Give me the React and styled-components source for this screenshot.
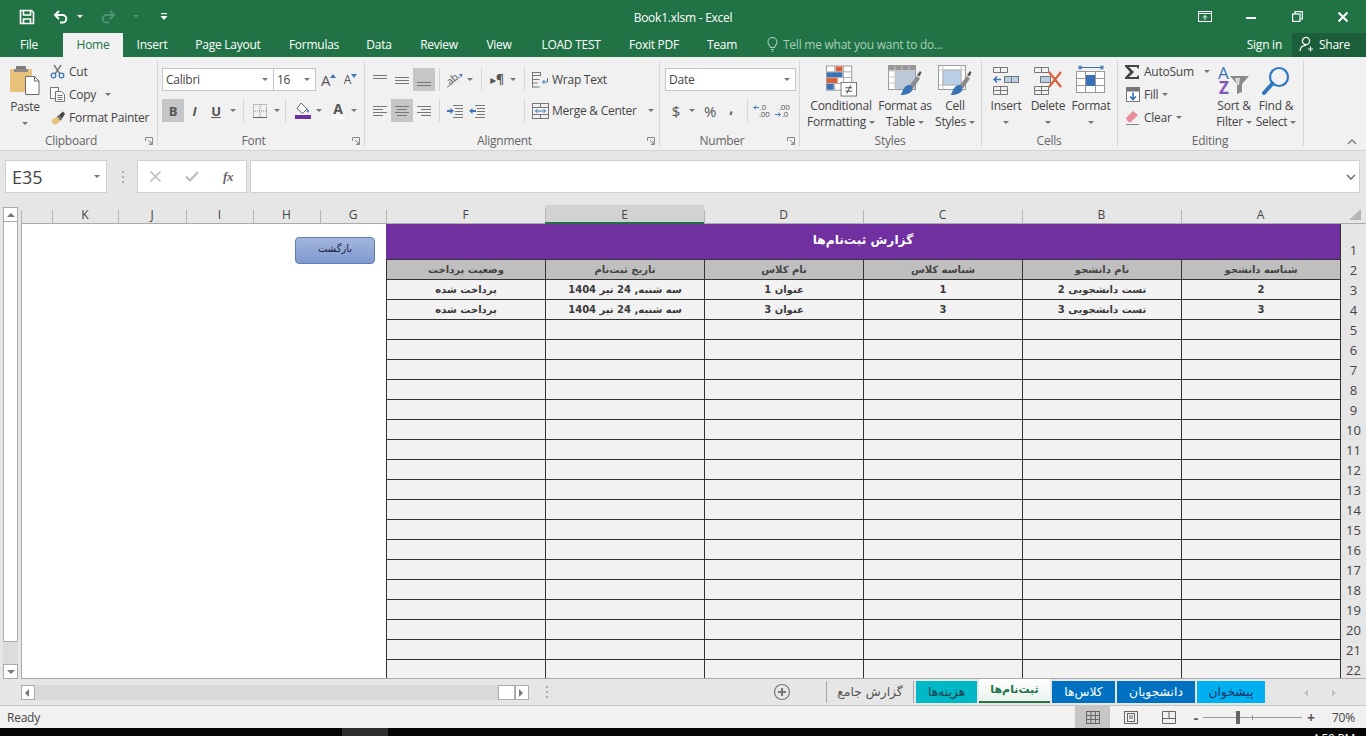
import styled, { createGlobalStyle } from "styled-components";

const GlobalStyle = createGlobalStyle`
  html, body { margin: 0; padding: 0; height: 100%; overflow: hidden; }
  body {
    font-family: "Open Sans", "Noto Sans", "DejaVu Sans", sans-serif;
    font-size: 12px;
    color: #444;
    letter-spacing: -0.25px;
  }
  * { box-sizing: border-box; }
  svg { display: block; overflow: visible; }
`;

const Page = styled.div`
  width: 1366px;
  height: 736px;
  display: flex;
  flex-direction: column;
  background: #e6e6e6;
  overflow: hidden;
`;

/* ---------- title bar ---------- */
const TitleBar = styled.header`
  height: 33px;
  background: #217346;
  color: #fff;
  display: grid;
  grid-template-columns: 1fr auto 1fr;
  align-items: center;
`;
const Qat = styled.div`
  display: flex;
  align-items: center;
  padding-left: 19px;
`;
const QatBtn = styled.div`
  width: ${(p) => p.$w}px;
  margin-left: ${(p) => p.$ml || 0}px;
  display: flex;
  justify-content: center;
  align-items: center;
`;
const DocTitle = styled.div`
  font-size: 12px;
  padding-top: 1px;
`;
const WinControls = styled.div`
  display: flex;
  justify-content: flex-end;
  align-items: center;
`;
const WinBtn = styled.div`
  width: 46px;
  display: flex;
  justify-content: center;
`;

/* ---------- tabs ---------- */
const TabBar = styled.nav`
  height: 24px;
  background: #217346;
  display: flex;
  align-items: stretch;
  color: #fff;
`;
const Tab = styled.div`
  width: ${(p) => p.$w}px;
  margin-right: ${(p) => p.$mr || 0}px;
  padding-bottom: 2px;
  display: flex;
  align-items: center;
  justify-content: center;
  background: ${(p) => (p.$active ? "#f1f1f1" : "transparent")};
  color: ${(p) => (p.$active ? "#217346" : "#fff")};
`;
const TellMe = styled.div`
  display: flex;
  align-items: center;
  gap: 5px;
  margin-left: 14px;
  padding-bottom: 2px;
  color: #a9cdb7;
`;
const SignIn = styled.div`
  margin-left: auto;
  display: flex;
  align-items: center;
  padding: 0 10px 2px 0;
`;
const Share = styled.div`
  width: 74px;
  background: #1b5e39;
  display: flex;
  align-items: center;
  gap: 4px;
  padding: 0 0 2px 7px;
`;

/* ---------- ribbon ---------- */
const Ribbon = styled.section`
  height: 94px;
  background: #f1f1f1;
  border-bottom: 1px solid #d4d4d4;
  display: flex;
  align-items: flex-start;
  padding-top: 4px;
`;
const Group = styled.div`
  width: ${(p) => p.$w}px;
  height: 85px;
  flex-shrink: 0;
  display: flex;
  flex-direction: column;
  border-right: 1px solid #d6d6d6;
`;
const GroupBody = styled.div`
  height: 72px;
  flex-shrink: 0;
  display: flex;
  padding-left: ${(p) => p.$pl || 0}px;
`;
const GroupLabel = styled.div`
  height: 16px;
  flex-shrink: 0;
  display: grid;
  grid-template-columns: ${(p) => (p.$launcher ? "1fr 14px" : "1fr")};
  align-items: center;
  text-align: center;
  color: #666;
  line-height: 16px;
  margin-right: 1px;
`;
const Launcher = styled.svg`
  width: 8px;
  height: 8px;
  justify-self: center;
`;
const PasteBtn = styled.div`
  width: 44px;
  margin-left: 3px;
  display: flex;
  flex-direction: column;
  align-items: center;
  padding-top: 4px;
`;
const PasteLabel = styled.span`
  margin-top: 3px;
`;
const SmallCol = styled.div`
  width: ${(p) => (p.$w ? `${p.$w}px` : "auto")};
  margin-left: ${(p) => p.$ml || 0}px;
  padding-left: ${(p) => p.$pl || 0}px;
  margin-top: -1px;
  display: flex;
  flex-direction: column;
  flex-shrink: 0;
`;
const SmallBtn = styled.div`
  height: 23px;
  display: flex;
  align-items: center;
  gap: 4px;
  white-space: nowrap;
`;
const IconSlot = styled.span`
  width: ${(p) => p.$w || 14}px;
  display: flex;
  justify-content: center;
  flex-shrink: 0;
`;
const Rows = styled.div`
  display: flex;
  flex-direction: column;
  gap: 8px;
  padding-top: 7px;
  width: ${(p) => (p.$w ? `${p.$w}px` : "auto")};
  flex-shrink: 0;
`;
const Row = styled.div`
  height: 23px;
  display: flex;
  align-items: center;
`;
const Tool = styled.div`
  width: ${(p) => p.$w}px;
  height: 23px;
  margin-left: ${(p) => p.$ml || 0}px;
  display: flex;
  align-items: center;
  justify-content: center;
  flex-shrink: 0;
  background: ${(p) => (p.$active ? "#c6c6c6" : "transparent")};
  color: #555;
  font-weight: ${(p) => (p.$bold ? 700 : 400)};
  font-size: ${(p) => p.$fs || 12}px;
  font-style: ${(p) => (p.$italic ? "italic" : "normal")};
  text-decoration: ${(p) => (p.$under ? "underline" : "none")};
`;
const CommaMark = styled(Tool)`
  padding-bottom: 7px;
`;
const FontColorA = styled.span`
  font-weight: 700;
  font-size: 14px;
  line-height: 14px;
  color: #555;
  padding: 0 2px;
  border-bottom: 3px solid #fff;
`;
const RtlMark = styled.span`
  color: #555;
  font-size: 12px;
  font-weight: 700;
`;
const ToolSep = styled.span`
  width: 1px;
  height: 23px;
  background: #d6d6d6;
  flex-shrink: 0;
  margin: 0 ${(p) => p.$r ?? 4}px 0 ${(p) => p.$l ?? 4}px;
`;
const PushSep = styled(ToolSep)`
  margin: 0 0 0 auto;
`;
const Combo = styled.div`
  width: ${(p) => p.$w}px;
  height: 23px;
  background: #fff;
  border: 1px solid #c6c6c6;
  display: flex;
  align-items: center;
  justify-content: space-between;
  padding: 0 5px 0 3px;
  flex-shrink: 0;
  margin-left: ${(p) => p.$ml || 0}px;
`;
const WrapCol = styled.div`
  padding-left: 7px;
  display: flex;
  flex-direction: column;
  gap: 8px;
  padding-top: 7px;
`;
const BigBtn = styled.div`
  width: ${(p) => p.$w}px;
  flex-shrink: 0;
  display: flex;
  flex-direction: column;
  align-items: center;
  padding-top: 4px;
  line-height: 16px;
  text-align: center;
  white-space: nowrap;
`;
const BigIcon = styled.div`
  height: 33px;
  padding-bottom: 1px;
  display: flex;
  align-items: center;
  justify-content: center;
`;
const CaretLine = styled.div`
  height: 16px;
  display: flex;
  align-items: center;
  justify-content: center;
  gap: 3px;
`;
const Caret = styled.i`
  display: inline-block;
  width: 0;
  height: 0;
  flex-shrink: 0;
  border-left: 3px solid transparent;
  border-right: 3px solid transparent;
  border-top: 3px solid ${(p) => p.$c || "#777"};
  margin-left: ${(p) => p.$ml || 0}px;
`;
const CaretBtn = styled.div`
  width: ${(p) => p.$w}px;
  height: 23px;
  display: flex;
  align-items: center;
  justify-content: center;
  flex-shrink: 0;
`;
const RibbonEnd = styled.div`
  flex: 1;
  height: 85px;
  display: flex;
  align-items: flex-end;
  justify-content: flex-end;
  padding: 0 9px 1px 0;
`;

/* ---------- formula bar ---------- */
const FormulaRow = styled.div`
  height: 33px;
  margin: 9px 6px 12px 5px;
  display: flex;
  align-items: stretch;
  flex-shrink: 0;
`;
const NameBox = styled.div`
  width: 102px;
  background: #fff;
  border: 1px solid #d0d0d0;
  font-size: 18px;
  letter-spacing: 0;
  color: #444;
  display: flex;
  align-items: center;
  justify-content: space-between;
  padding: 0 6px 0 6px;
`;
const Dots = styled.div`
  width: 30px;
  display: flex;
  justify-content: center;
  align-items: center;
`;
const FnBox = styled.div`
  width: 110px;
  background: #fff;
  border: 1px solid #d0d0d0;
  display: flex;
  align-items: center;
  padding-left: 12px;
  gap: 24px;
`;
const FormulaInput = styled.div`
  flex: 1;
  margin-left: 3px;
  background: #fff;
  border: 1px solid #d0d0d0;
  display: flex;
  align-items: center;
  justify-content: flex-end;
  padding-right: 3px;
`;

/* ---------- sheet ---------- */
const Sheet = styled.div`
  height: 474px;
  display: flex;
  flex-shrink: 0;
`;
const VScroll = styled.div`
  width: 21px;
  padding: 2px 3px 0 3px;
  display: flex;
  flex-direction: column;
  flex-shrink: 0;
`;
const ScrollBtn = styled.div`
  height: 15px;
  background: #fff;
  border: 1px solid #ababab;
  display: flex;
  align-items: center;
  justify-content: center;
  flex-shrink: 0;
`;
const VThumb = styled.div`
  height: 420px;
  background: #fff;
  border: 1px solid #ababab;
  border-top: none;
  flex-shrink: 0;
`;
const VTrack = styled.div`
  flex: 1;
  background: #dcdcdc;
`;
const SheetMain = styled.div`
  flex: 1;
  display: flex;
  flex-direction: column;
  min-width: 0;
`;
const ColHeaders = styled.div`
  height: 19px;
  display: flex;
  flex-shrink: 0;
  border-bottom: 1px solid #ababab;
`;
const ColHead = styled.div`
  width: ${(p) => p.$w}px;
  flex-shrink: 0;
  display: flex;
  align-items: center;
  justify-content: center;
  font-size: 12px;
  letter-spacing: 0;
  color: #444;
  position: relative;
  background: ${(p) => (p.$selected ? "#d2d2d2" : "transparent")};
  border-bottom: ${(p) => (p.$selected ? "2px solid #217346" : "none")};
  margin-bottom: ${(p) => (p.$selected ? "-1px" : "0")};
  padding-top: 1px;
  &::after {
    content: "";
    position: absolute;
    left: 0;
    bottom: 0;
    width: 1px;
    height: 13px;
    background: #b5b5b5;
  }
`;
const Corner = styled.div`
  flex: 1;
  display: flex;
  align-items: flex-end;
  justify-content: flex-end;
  padding: 0 5px 3px 0;
`;
const SheetBody = styled.div`
  flex: 1;
  display: flex;
  min-height: 0;
  overflow: hidden;
  border-bottom: 1px solid #ababab;
`;
const BlankPane = styled.div`
  width: 365px;
  flex-shrink: 0;
  background: #fff;
  border-left: 1px solid #ababab;
  position: relative;
`;
const BackButton = styled.div`
  position: absolute;
  top: 13px;
  right: 11px;
  width: 80px;
  height: 27px;
  border: 1px solid #5b7db4;
  border-radius: 4px;
  background: linear-gradient(#a3b6de, #7f99cf);
  color: #14213d;
  font-family: "DejaVu Sans", sans-serif;
  font-size: 10px;
  letter-spacing: 0;
  display: flex;
  align-items: flex-start;
  justify-content: center;
  padding-top: 5px;
`;
const Table = styled.div`
  width: 955px;
  flex-shrink: 0;
  display: grid;
  grid-template-columns: repeat(6, 159px);
  grid-template-rows: 36px;
  grid-auto-rows: 20px;
  border-right: 1px solid #333;
  align-content: start;
  font-family: "DejaVu Sans", sans-serif;
  letter-spacing: 0;
`;
const TitleCell = styled.div`
  grid-column: 1 / -1;
  background: #7030a0;
  color: #fff;
  font-weight: 700;
  font-size: 12.2px;
  display: flex;
  align-items: center;
  justify-content: center;
  border-bottom: 1px solid #333;
  padding-bottom: 3px;
`;
const Cell = styled.div`
  background: ${(p) => (p.$head ? "#bfbfbf" : "#f2f2f2")};
  border-bottom: 1px solid #333;
  border-left: 1px solid #333;
  color: ${(p) => (p.$head ? "#444" : "#3a3a3a")};
  font-weight: 700;
  font-size: 10px;
  display: flex;
  align-items: center;
  justify-content: center;
  white-space: nowrap;
  padding-bottom: 1px;
`;
const RowHeaders = styled.div`
  flex: 1;
  display: flex;
  flex-direction: column;
`;
const RowHead = styled.div`
  height: ${(p) => p.$h}px;
  flex-shrink: 0;
  display: flex;
  align-items: flex-end;
  justify-content: center;
  font-size: 13px;
  letter-spacing: 0;
  color: #444;
  line-height: 18px;
  padding-bottom: 1px;
`;

/* ---------- sheet tabs ---------- */
const BottomBar = styled.div`
  height: 26px;
  display: flex;
  align-items: center;
  flex-shrink: 0;
`;
const HScroll = styled.div`
  width: 553px;
  padding-left: 21px;
  display: flex;
  align-items: center;
  flex-shrink: 0;
`;
const HBtn = styled.div`
  width: ${(p) => p.$w || 14}px;
  height: 15px;
  background: #fff;
  border: 1px solid #ababab;
  display: flex;
  align-items: center;
  justify-content: center;
  flex-shrink: 0;
`;
const HTrack = styled.div`
  width: 463px;
  height: 15px;
  background: #d9d9d9;
`;
const HDots = styled.span`
  margin-left: 16px;
`;
const AddSheet = styled.div`
  margin-left: 220px;
  flex-shrink: 0;
`;
const TabStrip = styled.div`
  width: 440px;
  margin-left: 34px;
  height: 22px;
  margin-top: -1px;
  display: flex;
  align-items: stretch;
  gap: 2px;
  flex-shrink: 0;
  font-family: "DejaVu Sans", sans-serif;
  font-size: 12.3px;
  letter-spacing: 0;
`;
const SheetTab = styled.div`
  width: ${(p) => p.$w}px;
  flex-shrink: 0;
  display: flex;
  align-items: center;
  justify-content: center;
  white-space: nowrap;
  background: ${(p) => p.$bg};
  color: ${(p) => p.$fg};
  ${(p) =>
    p.$active &&
    `
    margin-top: -2px;
    background: linear-gradient(#fff, #eaf3ee);
    border-bottom: 2px solid #217346;
    font-weight: 700;
    font-size: 11px;
  `}
`;
const TabDivider = styled.span`
  width: 1px;
  background: #a6a6a6;
  flex-shrink: 0;
`;
const TabNav = styled.div`
  flex: 1;
  display: flex;
  padding-left: 38px;
  gap: 20px;
`;

/* ---------- status bar ---------- */
const StatusBar = styled.footer`
  height: 23px;
  flex-shrink: 0;
  background: #f1f1f1;
  border-top: 1px solid #c6c6c6;
  display: flex;
  align-items: center;
  padding-left: 7px;
`;
const StatusRight = styled.div`
  margin-left: auto;
  width: 291px;
  height: 100%;
  display: flex;
  align-items: center;
`;
const ViewBtn = styled.div`
  width: ${(p) => p.$w}px;
  height: 100%;
  background: ${(p) => (p.$active ? "#c6c6c6" : "transparent")};
  display: flex;
  align-items: center;
  justify-content: center;
  flex-shrink: 0;
`;
const ZoomMark = styled.span`
  width: ${(p) => p.$w}px;
  text-align: center;
  font-weight: 700;
  font-size: 14px;
  color: #555;
  flex-shrink: 0;
  margin-left: ${(p) => p.$ml || 0}px;
`;
const ZoomTrack = styled.div`
  width: 99px;
  height: 1px;
  background: #9a9a9a;
  position: relative;
  flex-shrink: 0;
`;
const ZoomThumb = styled.span`
  position: absolute;
  left: 33px;
  top: -6px;
  width: 4px;
  height: 13px;
  background: #666;
`;
const ZoomTick = styled.span`
  position: absolute;
  left: 49px;
  top: -2px;
  width: 1px;
  height: 5px;
  background: #9a9a9a;
`;
const ZoomPct = styled.span`
  margin-left: 14px;
`;

const Taskbar = styled.div`
  height: 8px;
  background: #050505;
  display: flex;
  flex-shrink: 0;
  overflow: hidden;
`;
const TaskPatch = styled.div`
  width: 46px;
  margin-left: 342px;
  background: #2e2e2e;
`;
const Clock = styled.div`
  margin-left: auto;
  margin-right: 11px;
  color: #fff;
  font-size: 12px;
  line-height: 16px;
  padding-top: 3px;
`;

/* ---------- icons ---------- */
const SaveIcon = () => (
  <svg width="16" height="16" viewBox="0 0 16 16" fill="none" stroke="#fff" strokeWidth="1.6">
    <path d="M1.5 1.5h11l2 2v11h-13z" />
    <path d="M4.5 2v4h7V2M4.5 14.5V10h7v4.5" />
  </svg>
);
const UndoIcon = ({ c = "#fff", flip }) => (
  <svg width="16" height="14" viewBox="0 0 16 14" fill="none" stroke={c} strokeWidth="2">
    <g transform={flip ? "translate(16 0) scale(-1 1)" : undefined}>
      <path d="M6 1L2 5l4 4M2 5h7.5a3.8 3.8 0 0 1 0 7.6H7" />
    </g>
  </svg>
);
const QatMore = () => (
  <svg width="8" height="8" viewBox="0 0 8 8" fill="#fff">
    <rect x="1" y="0" width="6" height="1.2" />
    <path d="M0.5 3h7L4 7z" />
  </svg>
);
const DisplayIcon = () => (
  <svg width="14" height="11" viewBox="0 0 14 11" fill="none" stroke="#fff">
    <rect x=".5" y=".5" width="13" height="10" />
    <path d="M.5 2.5h13M7 9V4.5M5 6.5l2-2 2 2" />
  </svg>
);
const MinIcon = () => (
  <svg width="10" height="10" viewBox="0 0 10 10"><rect y="5" width="10" height="2" fill="#fff" /></svg>
);
const RestoreIcon = () => (
  <svg width="11" height="11" viewBox="0 0 11 11" fill="none" stroke="#fff" strokeWidth="1.2">
    <rect x=".6" y="3" width="7.4" height="7.4" />
    <path d="M3 3V.6h7.4V8H8" />
  </svg>
);
const CloseIcon = () => (
  <svg width="10" height="10" viewBox="0 0 10 10" stroke="#fff" strokeWidth="2"><path d="M.5.5l9 9M9.5.5l-9 9" /></svg>
);
const BulbIcon = () => (
  <svg width="11" height="15" viewBox="0 0 11 15" fill="none" stroke="#a9cdb7" strokeWidth="1.1">
    <path d="M3.5 10.5C3.2 8.6 1 7.8 1 5a4.5 4.5 0 0 1 9 0c0 2.8-2.2 3.6-2.5 5.5z" />
    <path d="M4 12.5h3M4.5 14.2h2" />
  </svg>
);
const UserIcon = () => (
  <svg width="16" height="16" viewBox="0 0 16 16" fill="none" stroke="#fff" strokeWidth="1.2">
    <circle cx="7" cy="5" r="3.6" />
    <path d="M1 15c.3-3.4 2.6-5.6 6-5.6M11.5 10.5v5M9 13h5" />
  </svg>
);
const PasteIcon = () => (
  <svg width="30" height="30" viewBox="0 0 30 30">
    <rect x="0" y="4" width="22" height="23" rx="1" fill="#e8c27b" />
    <rect x="6" y="1" width="10" height="5" rx="1" fill="#7d7d7d" />
    <rect x="4" y="4" width="14" height="3" fill="#8a8a8a" />
    <path d="M15.5 11.5h9l4.5 4.5v13.5h-13.5z" fill="#fff" stroke="#6a6a6a" />
    <path d="M24.5 11.5V16H29" fill="none" stroke="#6a6a6a" />
  </svg>
);
const CutIcon = () => (
  <svg width="15" height="15" viewBox="0 0 15 15" fill="none">
    <path d="M4 1l6 9M11 1L5 10" stroke="#777" strokeWidth="1.4" />
    <circle cx="3.5" cy="11.5" r="2.3" stroke="#3f78b5" strokeWidth="1.3" />
    <circle cx="11.5" cy="11.5" r="2.3" stroke="#3f78b5" strokeWidth="1.3" />
  </svg>
);
const CopyIcon = () => (
  <svg width="15" height="15" viewBox="0 0 15 15" fill="#f8f8f8" stroke="#777">
    <rect x=".5" y=".5" width="8" height="11" />
    <path d="M5.5 4.5h6l3 3v7h-9z" />
    <path d="M7.5 8.5h5M7.5 10.5h5M7.5 12.5h5" />
  </svg>
);
const PainterIcon = () => (
  <svg width="16" height="14" viewBox="0 0 16 14">
    <path d="M1 9.5L7 5.5l3.5 4.2L6 13.5H4z" fill="#e8c27b" />
    <path d="M7 5.5l1.8-1.5 3.3 4-1.6 1.7z" fill="#666" />
    <path d="M9 4l4-3.5 2 2.3-3 5z" fill="#444" />
  </svg>
);
const ArrowA = ({ size, up }) => (
  <Tool $w={13} $fs={size}>
    A
    <svg width="6" height="4" viewBox="0 0 6 4" style={{ marginTop: -8 }}>
      <path d={up ? "M0 4L3 0l3 4z" : "M0 0l3 4 3-4z"} fill="#3f78b5" />
    </svg>
  </Tool>
);
const BordersIcon = () => (
  <svg width="14" height="14" viewBox="0 0 14 14" fill="none" stroke="#888" strokeDasharray="1 1">
    <rect x=".5" y=".5" width="13" height="13" />
    <path d="M7 0v14M0 7h14" />
    <path d="M0 13.5h14" stroke="#666" strokeDasharray="none" />
  </svg>
);
const FillIcon = () => (
  <svg width="16" height="17" viewBox="0 0 16 17">
    <path d="M6 1l6 6-4.5 4.5L2 6.5z" fill="#fff" stroke="#666" />
    <path d="M12 6.5c1 1 2 2 2 3a1 1 0 0 1-2 0z" fill="#3f78b5" />
    <rect x="0" y="13" width="16" height="4" fill="#7030a0" />
  </svg>
);
const Lines = ({ w = 14, ys, widths, align = "left", c = "#777" }) => (
  <svg width={w} height="16" viewBox={`0 0 ${w} 16`} stroke={c}>
    {ys.map((y, i) => {
      const lw = widths ? widths[i] : w;
      const x = align === "left" ? 0 : align === "right" ? w - lw : (w - lw) / 2;
      return <line key={y} x1={x} x2={x + lw} y1={y + 0.5} y2={y + 0.5} />;
    })}
  </svg>
);
const OrientIcon = () => (
  <svg width="18" height="16" viewBox="0 0 18 16">
    <text x="1" y="11" fontSize="10" fill="#555" fontFamily="Open Sans" transform="rotate(-40 6 8)">ab</text>
    <path d="M1 15.5L14 4.5" stroke="#777" />
    <path d="M13 2l3.5 0-1 3.5z" fill="#3f78b5" />
  </svg>
);
const IndentIcon = ({ back }) => (
  <svg width="16" height="14" viewBox="0 0 16 14">
    <path d="M6 1.5h10M8 4.5h8M8 7.5h8M8 10.5h8M6 13.5h10" stroke="#777" />
    {back ? (
      <path d="M0 7l3.5-3v2H7v2H3.5v2z" fill="#3f78b5" />
    ) : (
      <path d="M7 7L3.5 4v2H0v2h3.5v2z" fill="#3f78b5" />
    )}
  </svg>
);
const WrapIcon = () => (
  <svg width="16" height="16" viewBox="0 0 16 16" fill="none" stroke="#777">
    <rect x=".5" y=".5" width="8" height="3" />
    <path d="M.5 3.5v12M.5 7.5h7M.5 11h5M.5 15h7" />
    <path d="M15.5 6v4h-5M12.5 8l-2 2 2 2" stroke="#3f78b5" />
  </svg>
);
const MergeIcon = () => (
  <svg width="17" height="16" viewBox="0 0 17 16" fill="none" stroke="#777">
    <rect x=".5" y=".5" width="16" height="15" />
    <path d="M.5 4.5h16M.5 11.5h16M8.5 .5v4M8.5 11.5v4" />
    <path d="M3.5 8h10M5.5 6l-2 2 2 2M11.5 6l2 2-2 2" stroke="#3f78b5" />
  </svg>
);
const DecimalIcon = ({ more }) => (
  <svg width="17" height="14" viewBox="0 0 17 14">
    <text x={more ? 4 : 6} y="6" fontSize="8" fill="#555" fontFamily="Open Sans">{more ? ".00" : ".0"}</text>
    <text x={more ? 7 : 5} y="13" fontSize="8" fill="#555" fontFamily="Open Sans">{more ? ".0" : ".00"}</text>
    <path d={more ? "M0 10.5h5M3.5 8.5l2 2-2 2" : "M5 3.5H0M2 1.5l-2 2 2 2"} fill="none" stroke="#3f78b5" />
  </svg>
);
const CondIcon = () => (
  <svg width="31" height="32" viewBox="0 0 32 32" fill="none">
    <rect x=".5" y=".5" width="26" height="25" fill="#fff" stroke="#999" />
    <path d="M9 .5v25M18 .5v25M.5 6.5h26M.5 12.5h26M.5 18.5h26" stroke="#aaa" />
    <rect x="10" y="1" width="7" height="5" fill="#d9603b" />
    <rect x="1" y="7" width="16" height="5" fill="#3a73b5" />
    <rect x="1" y="13" width="11" height="5" fill="#d9603b" />
    <rect x="1" y="19" width="7" height="6" fill="#3a73b5" />
    <rect x="15.5" y="17.5" width="16" height="14" fill="#fff" stroke="#777" />
    <path d="M20 23h7M20 26.5h7M25.5 20.5l-4 8.5" stroke="#444" />
  </svg>
);
const Brush = () => (
  <>
    <path d="M21 21L29 11l3 2.5-7 10z" fill="#8a8a8a" />
    <path d="M29 10l3-4 1.5 1.5-2 4z" fill="#555" />
    <path d="M20 20c3 0 5 2 4.5 4.5-.7 3.5-6 5.5-12 5.5 2.5-2.5 2-8 7.5-10z" fill="#3a73b5" />
  </>
);
const TableStyleIcon = () => (
  <svg width="34" height="32" viewBox="0 0 34 32" fill="none">
    <rect x=".5" y=".5" width="27" height="24" fill="#fff" stroke="#999" />
    <rect x=".5" y=".5" width="27" height="5" fill="#999" />
    <rect x="7" y="6" width="20" height="18" fill="#b9cadf" />
    <path d="M7 .5v24M14 .5v24M21 .5v24M.5 6h27M.5 12h27M.5 18h27" stroke="#c5c5c5" />
    <Brush />
  </svg>
);
const CellStyleIcon = () => (
  <svg width="34" height="32" viewBox="0 0 34 32" fill="none">
    <rect x=".5" y=".5" width="27" height="24" fill="#fff" stroke="#999" />
    <rect x="5" y="5" width="18" height="15" fill="#b9cfe6" stroke="#9ab" />
    <path d="M5 .5v24M23 .5v24M.5 5h27M.5 20h27" stroke="#c5c5c5" />
    <Brush />
  </svg>
);
const InsertIcon = () => (
  <svg width="28" height="30" viewBox="0 0 28 30" fill="none" stroke="#777">
    <path d="M1.5 1.5h14v5h-14zM8.5 1.5v5M1.5 20.5h14v8h-14zM8.5 20.5v8M1.5 24.5h14" />
    <rect x="12.5" y="10.5" width="14" height="6" fill="#b9cfe6" />
    <path d="M19.5 10.5v6" />
    <path d="M9 13.5H2M5 10.5l-3 3 3 3" stroke="#3a73b5" strokeWidth="1.4" />
  </svg>
);
const DeleteIcon = () => (
  <svg width="30" height="30" viewBox="0 0 30 30" fill="none" stroke="#777">
    <path d="M1.5 1.5h14v5h-14zM8.5 1.5v5M1.5 20.5h14v8h-14zM8.5 20.5v8M1.5 24.5h14" />
    <rect x="7.5" y="10.5" width="10" height="6" fill="#b9cfe6" />
    <path d="M16 6l12 15M28 6L16 21" stroke="#d9603b" strokeWidth="2.2" />
  </svg>
);
const FormatIcon = () => (
  <svg width="30" height="32" viewBox="0 0 30 32" fill="none" stroke="#999">
    <path d="M3 2.5h24M3 .5v4M27 .5v4M3 2.5l3-2M3 2.5l3 2M27 2.5l-3-2M27 2.5l-3 2" stroke="#3a73b5" />
    <rect x=".5" y="6.5" width="28" height="21" fill="#fff" />
    <path d="M9.5 6.5v21M19.5 6.5v21M.5 13.5h28M.5 20.5h28" />
    <rect x="10" y="10" width="9" height="11" fill="#3a73b5" stroke="none" />
  </svg>
);
const SigmaIcon = () => (
  <svg width="15" height="14" viewBox="0 0 15 14"><path d="M0 0h14v3.5h-1.5L12 2H4l5 5-5 5h8l.5-1.5H14V14H0v-1.5L5 7 0 1.5z" fill="#444" /></svg>
);
const FillDownIcon = () => (
  <svg width="14" height="15" viewBox="0 0 14 15" fill="#fff" stroke="#777">
    <rect x=".5" y=".5" width="13" height="14" />
    <rect x=".5" y=".5" width="13" height="3.5" fill="#777" />
    <path d="M7 5.5v7M4 9.5l3 3 3-3" stroke="#2f6fb5" strokeWidth="1.6" fill="none" />
  </svg>
);
const EraserIcon = () => (
  <svg width="15" height="15" viewBox="0 0 15 15">
    <path d="M1 8l7-7 5 4-7 7H3z" fill="#e88f9a" />
    <path d="M1 14.5h13" stroke="#888" />
  </svg>
);
const SortIcon = () => (
  <svg width="32" height="30" viewBox="0 0 32 30">
    <text x="0" y="13" fontSize="17" fill="#3a73b5" fontFamily="Open Sans">A</text>
    <text x="1" y="28" fontSize="17" fontWeight="700" fill="#7e57b8" fontFamily="Open Sans">Z</text>
    <path d="M12 10h19l-7 8v8l-5 2V18z" fill="#8a8a8a" />
    <path d="M17 12h5l-1 7h-2z" fill="#d9d9d9" />
  </svg>
);
const FindIcon = () => (
  <svg width="28" height="30" viewBox="0 0 28 30" fill="none" stroke="#2f78bf">
    <circle cx="17" cy="11" r="9" strokeWidth="2.2" />
    <path d="M10.5 17.5L2 27" strokeWidth="4" strokeLinecap="round" />
  </svg>
);
const MiniArrow = ({ dir, c = "#777" }) => {
  const d = { up: "M0 5l4-4 4 4z", down: "M0 1h8L4 5z", left: "M5 0v8L1 4z", right: "M1 0v8l4-4z" }[dir];
  return (
    <svg width="8" height="8" viewBox="0 0 8 6">
      <path d={d} fill={c} />
    </svg>
  );
};
const LauncherIcon = () => (
  <Launcher viewBox="0 0 8 8" fill="none" stroke="#888">
    <path d="M.5 4V.5H7.5V7.5H4M3 3l4 4M7 4.5V7H4.5" />
  </Launcher>
);
const VDots = () => (
  <svg width="3" height="14" viewBox="0 0 3 14" fill="#aaa">
    <rect x="1" y="1" width="2" height="2" />
    <rect x="1" y="6" width="2" height="2" />
    <rect x="1" y="11" width="2" height="2" />
  </svg>
);
const PlusCircle = () => (
  <svg width="18" height="18" viewBox="0 0 18 18" fill="none" stroke="#777">
    <circle cx="9" cy="9" r="7.5" strokeWidth="1.2" />
    <path d="M9 5v8M5 9h8" strokeWidth="2" />
  </svg>
);
const CornerIcon = () => (
  <svg width="12" height="11" viewBox="0 0 12 11"><path d="M12 0v11H0z" fill="#b5b5b5" /></svg>
);
const GridView = () => (
  <svg width="14" height="13" viewBox="0 0 14 13" fill="none" stroke="#666">
    <rect x=".5" y=".5" width="13" height="12" />
    <path d="M5 .5v12M9.5 .5v12M.5 4.5h13M.5 8.5h13" />
  </svg>
);
const PageView = () => (
  <svg width="14" height="13" viewBox="0 0 14 13" fill="none" stroke="#666">
    <rect x=".5" y=".5" width="13" height="12" />
    <rect x="3.5" y="2.5" width="7" height="8" />
    <path d="M5 5h4M5 7h4" />
  </svg>
);
const BreakView = () => (
  <svg width="14" height="13" viewBox="0 0 14 13" fill="none" stroke="#666">
    <path d="M.5 12.5V.5h13v12zM7 .5v7H.5M7 7.5h6.5" />
  </svg>
);
const FnX = () => (
  <svg width="11" height="11" viewBox="0 0 11 11" stroke="#bbb" strokeWidth="1.6"><path d="M.5.5l10 10M10.5.5l-10 10" /></svg>
);
const FnCheck = () => (
  <svg width="14" height="11" viewBox="0 0 14 11" fill="none" stroke="#bbb" strokeWidth="2"><path d="M1 5.5l4 4L13 1" /></svg>
);
const FxText = styled.span`
  font-family: "Liberation Serif", serif;
  font-style: italic;
  font-weight: 700;
  font-size: 13px;
  color: #666;
`;

/* ---------- data ---------- */
const zwnj = "\u200c";
const regs = `ثبت${zwnj}نام`;
const columns = [
  ["K", 66], ["J", 68], ["I", 67], ["H", 67], ["G", 66],
  ["F", 159], ["E", 159, true], ["D", 159], ["C", 159], ["B", 159], ["A", 159],
];
const headers = ["شناسه دانشجو", "نام دانشجو", "شناسه کلاس", "نام کلاس", `تاریخ ${regs}`, "وضعیت پرداخت"];
const records = [
  ["2", "تست دانشجویی 2", "1", "عنوان 1", "سه شنبه, 24 تیر 1404", "پرداخت شده"],
  ["3", "تست دانشجویی 3", "3", "عنوان 3", "سه شنبه, 24 تیر 1404", "پرداخت شده"],
];
const blankRows = 18;

export default function App() {
  const rows = [...records, ...Array.from({ length: blankRows }, () => Array(6).fill(""))];
  return (
    <Page>
      <GlobalStyle />
      <TitleBar>
        <Qat>
          <SaveIcon />
          <QatBtn $w={32} $ml={10}><UndoIcon /></QatBtn>
          <Caret $c="#fff" />
          <QatBtn $w={50}><UndoIcon c="#4f9470" flip /></QatBtn>
          <Caret $c="#4f9470" />
          <QatBtn $w={50}><QatMore /></QatBtn>
        </Qat>
        <DocTitle>Book1.xlsm - Excel</DocTitle>
        <WinControls>
          <WinBtn><DisplayIcon /></WinBtn>
          <WinBtn><MinIcon /></WinBtn>
          <WinBtn><RestoreIcon /></WinBtn>
          <WinBtn><CloseIcon /></WinBtn>
        </WinControls>
      </TitleBar>

      <TabBar>
        <Tab $w={58} $mr={5}>File</Tab>
        <Tab $w={60} $active>Home</Tab>
        <Tab $w={58}>Insert</Tab>
        <Tab $w={94}>Page Layout</Tab>
        <Tab $w={78}>Formulas</Tab>
        <Tab $w={52}>Data</Tab>
        <Tab $w={68}>Review</Tab>
        <Tab $w={52}>View</Tab>
        <Tab $w={92}>LOAD TEST</Tab>
        <Tab $w={74}>Foxit PDF</Tab>
        <Tab $w={62}>Team</Tab>
        <TellMe><BulbIcon />Tell me what you want to do...</TellMe>
        <SignIn>Sign in</SignIn>
        <Share><UserIcon />Share</Share>
      </TabBar>

      <Ribbon>
        <Group $w={158}>
          <GroupBody>
            <PasteBtn>
              <PasteIcon />
              <PasteLabel>Paste</PasteLabel>
              <CaretLine><Caret /></CaretLine>
            </PasteBtn>
            <SmallCol $ml={3}>
              <SmallBtn><IconSlot $w={15}><CutIcon /></IconSlot>Cut</SmallBtn>
              <SmallBtn><IconSlot $w={15}><CopyIcon /></IconSlot>Copy<Caret $ml={5} /></SmallBtn>
              <SmallBtn><IconSlot $w={15}><PainterIcon /></IconSlot>Format Painter</SmallBtn>
            </SmallCol>
          </GroupBody>
          <GroupLabel $launcher>Clipboard<LauncherIcon /></GroupLabel>
        </Group>

        <Group $w={207}>
          <GroupBody $pl={4}>
            <Rows>
              <Row>
                <Combo $w={112}>Calibri<Caret /></Combo>
                <Combo $w={43} $ml={-1}>16<Caret /></Combo>
                <Tool $w={6} />
                <ArrowA size={15} up />
                <Tool $w={9} />
                <ArrowA size={12} />
              </Row>
              <Row>
                <Tool $w={22} $active $bold $fs={13}>B</Tool>
                <Tool $w={21} $italic $bold $fs={13}>I</Tool>
                <Tool $w={22} $under $bold $fs={13}>U</Tool>
                <CaretBtn $w={12}><Caret /></CaretBtn>
                <ToolSep />
                <Tool $w={24}><BordersIcon /></Tool>
                <CaretBtn $w={9}><Caret /></CaretBtn>
                <ToolSep />
                <Tool $w={26}><FillIcon /></Tool>
                <CaretBtn $w={6}><Caret /></CaretBtn>
                <Tool $w={26} $ml={3}><FontColorA>A</FontColorA></Tool>
                <CaretBtn $w={6}><Caret /></CaretBtn>
              </Row>
            </Rows>
          </GroupBody>
          <GroupLabel $launcher>Font<LauncherIcon /></GroupLabel>
        </Group>

        <Group $w={295}>
          <GroupBody $pl={4}>
            <Rows $w={156}>
              <Row>
                <Tool $w={22}><Lines ys={[3, 6]} /></Tool>
                <Tool $w={22}><Lines ys={[5, 8, 11]} /></Tool>
                <Tool $w={22} $active><Lines ys={[10, 13]} /></Tool>
                <ToolSep />
                <Tool $w={22}><OrientIcon /></Tool>
                <CaretBtn $w={8}><Caret /></CaretBtn>
                <ToolSep $l={7} />
                <Tool $w={22}><RtlMark>▸¶</RtlMark></Tool>
                <CaretBtn $w={10}><Caret /></CaretBtn>
                <PushSep />
              </Row>
              <Row>
                <Tool $w={22}><Lines ys={[3, 6, 9, 12]} widths={[14, 10, 14, 10]} /></Tool>
                <Tool $w={22} $active><Lines ys={[3, 6, 9, 12]} widths={[14, 10, 14, 10]} align="center" /></Tool>
                <Tool $w={22}><Lines ys={[3, 6, 9, 12]} widths={[14, 10, 14, 10]} align="right" /></Tool>
                <ToolSep />
                <Tool $w={22}><IndentIcon /></Tool>
                <Tool $w={22}><IndentIcon back /></Tool>
                <PushSep />
              </Row>
            </Rows>
            <WrapCol>
              <SmallBtn><IconSlot $w={16}><WrapIcon /></IconSlot>Wrap Text</SmallBtn>
              <SmallBtn><IconSlot $w={16}><MergeIcon /></IconSlot>Merge &amp; Center<Caret $ml={7} /></SmallBtn>
            </WrapCol>
          </GroupBody>
          <GroupLabel $launcher>Alignment<LauncherIcon /></GroupLabel>
        </Group>

        <Group $w={140}>
          <GroupBody $pl={5}>
            <Rows>
              <Combo $w={131}>Date<Caret /></Combo>
              <Row>
                <Tool $w={22} $fs={15}>$</Tool>
                <CaretBtn $w={10}><Caret /></CaretBtn>
                <Tool $w={26} $fs={15}>%</Tool>
                <CommaMark $w={16} $bold $fs={14}>,</CommaMark>
                <ToolSep $l={8} />
                <Tool $w={20}><DecimalIcon /></Tool>
                <Tool $w={22}><DecimalIcon more /></Tool>
              </Row>
            </Rows>
          </GroupBody>
          <GroupLabel $launcher>Number<LauncherIcon /></GroupLabel>
        </Group>

        <Group $w={182}>
          <GroupBody $pl={3}>
            <BigBtn $w={76}>
              <BigIcon><CondIcon /></BigIcon>
              <span>Conditional</span>
              <CaretLine>Formatting<Caret /></CaretLine>
            </BigBtn>
            <BigBtn $w={52}>
              <BigIcon><TableStyleIcon /></BigIcon>
              <span>Format as</span>
              <CaretLine>Table<Caret /></CaretLine>
            </BigBtn>
            <BigBtn $w={48}>
              <BigIcon><CellStyleIcon /></BigIcon>
              <span>Cell</span>
              <CaretLine>Styles<Caret /></CaretLine>
            </BigBtn>
          </GroupBody>
          <GroupLabel>Styles</GroupLabel>
        </Group>

        <Group $w={136}>
          <GroupBody $pl={3}>
            <BigBtn $w={42}>
              <BigIcon><InsertIcon /></BigIcon>
              <span>Insert</span>
              <CaretLine><Caret /></CaretLine>
            </BigBtn>
            <BigBtn $w={42}>
              <BigIcon><DeleteIcon /></BigIcon>
              <span>Delete</span>
              <CaretLine><Caret /></CaretLine>
            </BigBtn>
            <BigBtn $w={44}>
              <BigIcon><FormatIcon /></BigIcon>
              <span>Format</span>
              <CaretLine><Caret /></CaretLine>
            </BigBtn>
          </GroupBody>
          <GroupLabel>Cells</GroupLabel>
        </Group>

        <Group $w={186}>
          <GroupBody>
            <SmallCol $w={95} $pl={7}>
              <SmallBtn><IconSlot $w={15}><SigmaIcon /></IconSlot>AutoSum<Caret $ml={6} /></SmallBtn>
              <SmallBtn><IconSlot $w={15}><FillDownIcon /></IconSlot>Fill<Caret /></SmallBtn>
              <SmallBtn><IconSlot $w={15}><EraserIcon /></IconSlot>Clear<Caret /></SmallBtn>
            </SmallCol>
            <BigBtn $w={42}>
              <BigIcon><SortIcon /></BigIcon>
              <span>Sort &amp;</span>
              <CaretLine>Filter<Caret /></CaretLine>
            </BigBtn>
            <BigBtn $w={42}>
              <BigIcon><FindIcon /></BigIcon>
              <span>Find &amp;</span>
              <CaretLine>Select<Caret /></CaretLine>
            </BigBtn>
          </GroupBody>
          <GroupLabel>Editing</GroupLabel>
        </Group>

        <RibbonEnd>
          <svg width="10" height="6" viewBox="0 0 10 6" fill="none" stroke="#777" strokeWidth="1.4"><path d="M1 5l4-4 4 4" /></svg>
        </RibbonEnd>
      </Ribbon>

      <FormulaRow>
        <NameBox>E35<Caret /></NameBox>
        <Dots><VDots /></Dots>
        <FnBox><FnX /><FnCheck /><FxText>fx</FxText></FnBox>
        <FormulaInput>
          <svg width="10" height="6" viewBox="0 0 10 6" fill="none" stroke="#666" strokeWidth="1.4"><path d="M1 1l4 4 4-4" /></svg>
        </FormulaInput>
      </FormulaRow>

      <Sheet>
        <VScroll>
          <ScrollBtn><MiniArrow dir="up" /></ScrollBtn>
          <VThumb />
          <VTrack />
          <ScrollBtn><MiniArrow dir="down" /></ScrollBtn>
        </VScroll>
        <SheetMain>
          <ColHeaders>
            <ColHead $w={31} />
            {columns.map(([name, w, selected]) => (
              <ColHead key={name} $w={w} $selected={selected}>{name}</ColHead>
            ))}
            <Corner><CornerIcon /></Corner>
          </ColHeaders>
          <SheetBody>
            <BlankPane>
              <BackButton dir="rtl">بازگشت</BackButton>
            </BlankPane>
            <Table dir="rtl">
              <TitleCell>{`گزارش ${regs}${zwnj}ها`}</TitleCell>
              {headers.map((h) => (
                <Cell key={h} $head>{h}</Cell>
              ))}
              {rows.flatMap((r, i) =>
                r.map((v, j) => <Cell key={`${i}-${j}`}>{v}</Cell>)
              )}
            </Table>
            <RowHeaders>
              {Array.from({ length: 22 }, (_, i) => (
                <RowHead key={i} $h={i === 0 ? 36 : 20}>{i + 1}</RowHead>
              ))}
            </RowHeaders>
          </SheetBody>
        </SheetMain>
      </Sheet>

      <BottomBar>
        <HScroll>
          <HBtn><MiniArrow dir="left" /></HBtn>
          <HTrack />
          <HBtn $w={17} />
          <HBtn><MiniArrow dir="right" /></HBtn>
          <HDots><VDots /></HDots>
        </HScroll>
        <AddSheet><PlusCircle /></AddSheet>
        <TabStrip dir="rtl">
          <SheetTab $w={68} $bg="#00b0f0" $fg="#1c2f5e">پیشخوان</SheetTab>
          <SheetTab $w={78} $bg="#0070c0" $fg="#fff">دانشجویان</SheetTab>
          <SheetTab $w={63} $bg="#0070c0" $fg="#fff">{`کلاس${zwnj}ها`}</SheetTab>
          <SheetTab $w={71} $active $fg="#217346">{`${regs}${zwnj}ها`}</SheetTab>
          <SheetTab $w={61} $bg="#00b8c6" $fg="#1c3a4a">{`هزینه${zwnj}ها`}</SheetTab>
          <TabDivider />
          <SheetTab $w={82} $bg="transparent" $fg="#555">گزارش جامع</SheetTab>
          <TabDivider />
        </TabStrip>
        <TabNav>
          <MiniArrow dir="left" c="#c4c4c4" />
          <MiniArrow dir="right" c="#c4c4c4" />
        </TabNav>
      </BottomBar>

      <StatusBar>
        Ready
        <StatusRight>
          <ViewBtn $w={35} $active><GridView /></ViewBtn>
          <ViewBtn $w={42}><PageView /></ViewBtn>
          <ViewBtn $w={34}><BreakView /></ViewBtn>
          <ZoomMark $w={14} $ml={3}>-</ZoomMark>
          <ZoomTrack><ZoomTick /><ZoomThumb /></ZoomTrack>
          <ZoomMark $w={14} $ml={2}>+</ZoomMark>
          <ZoomPct>70%</ZoomPct>
        </StatusRight>
      </StatusBar>

      <Taskbar>
        <TaskPatch />
        <Clock>4:50 PM</Clock>
      </Taskbar>
    </Page>
  );
}
